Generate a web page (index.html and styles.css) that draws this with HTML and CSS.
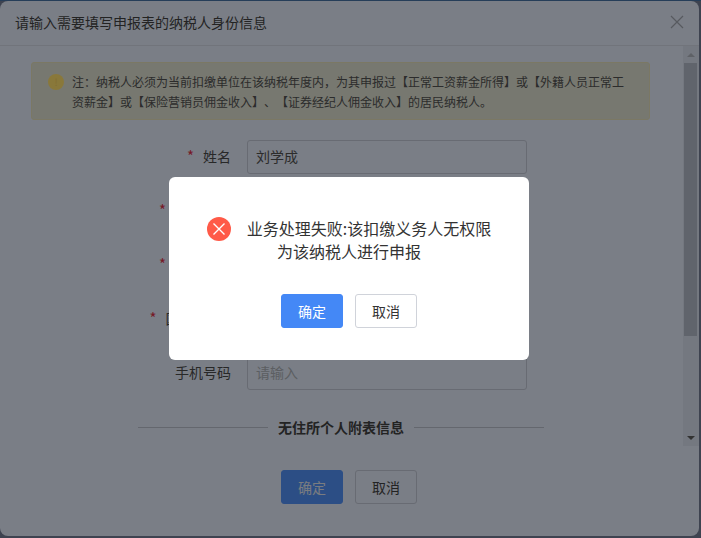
FILE: index.html
```html
<!DOCTYPE html>
<html lang="zh">
<head>
<meta charset="utf-8">
<title>纳税人身份信息</title>
<link rel="stylesheet" href="styles.css">
</head>
<body>
<div class="page">
  <section class="dialog">
    <header class="dialog-head">
      <h1 class="dialog-title">请输入需要填写申报表的纳税人身份信息</h1>
      <svg class="close" viewBox="0 0 14 14" width="14" height="14"><path d="M1 1l12 12M13 1L1 13" fill="none" stroke="#9aa0aa" stroke-width="1.2"/></svg>
    </header>
    <div class="dialog-main">
      <div class="content">
        <div class="notice">
          <span class="notice-icon">!</span>
          <p class="notice-text"><span class="notice-line">注<span class="punct">：</span>纳税人必须为当前扣缴单位在该纳税年度内<span class="punct">，</span>为其申报过【正常工资薪金所得】或【外籍人员正常工</span><span class="notice-line">资薪金】或【保险营销员佣金收入】、【证券经纪人佣金收入】的居民纳税人。</span></p>
        </div>
        <form class="form">
          <div class="row"><label class="label"><i class="star">*</i>姓名</label><div class="input">刘学成</div></div>
          <div class="row"><label class="label"><i class="star">*</i>证件类型</label><div class="input"></div></div>
          <div class="row"><label class="label"><i class="star">*</i>证件号码</label><div class="input"></div></div>
          <div class="row"><label class="label"><i class="star">*</i>国籍(地区)</label><div class="input"></div></div>
          <div class="row"><label class="label">手机号码</label><div class="input placeholder">请输入</div></div>
        </form>
        <div class="divider"><span class="rule"></span><strong class="divider-text">无住所个人附表信息</strong><span class="rule"></span></div>
      </div>
      <div class="scrollbar">
        <span class="arrow-box"><span class="arrow up"></span></span>
        <span class="thumb"></span>
        <span class="arrow-box end"><span class="arrow down"></span></span>
      </div>
    </div>
    <footer class="dialog-foot">
      <button class="btn primary" type="button">确定</button>
      <button class="btn" type="button">取消</button>
    </footer>
  </section>
</div>
<div class="overlay">
  <div class="alert">
    <p class="alert-msg"><svg class="err" viewBox="0 0 24 24" width="24" height="24"><circle cx="12" cy="12" r="12" fill="#ff5a48"/><path d="M6.5 6.5l11 11M17.5 6.5l-11 11" fill="none" stroke="#fff" stroke-width="1.4"/></svg>业务处理失败:该扣缴义务人无权限<br>为该纳税人进行申报</p>
    <div class="alert-actions">
      <button class="btn primary" type="button">确定</button>
      <button class="btn" type="button">取消</button>
    </div>
  </div>
</div>
</body>
</html>
```
FILE: styles.css
```css
* { box-sizing: border-box; }
html, body { margin: 0; height: 100%; }
body {
  background: #68728c;
  font-family: "Noto Sans CJK SC", "Liberation Sans", sans-serif;
  color: #333;
  overflow: hidden;
  border-top: 1px solid #38689f;
  text-spacing-trim: space-all;
}
.page { padding: 0 2px 2px 0; height: 537px; }
.dialog {
  height: 535px;
  background: #e0e8f8;
  border-radius: 8px;
  display: flex;
  flex-direction: column;
}
.dialog-head {
  height: 45px;
  flex: none;
  border-bottom: 1px solid #cfd5e2;
  display: flex;
  align-items: center;
  justify-content: space-between;
  padding: 0 15px 2px;
}
.dialog-title { margin: 0; font-size: 14px; font-weight: 400; line-height: 20px; color: #333; }
.dialog-main { height: 400px; flex: none; display: flex; overflow: hidden; }
.content { flex: 1; padding: 16px 33px 0 31px; }
.notice {
  height: 58px;
  width: 619px;
  background: #dadccc;
  border: 1px solid #e2dcb4;
  border-radius: 3px;
  display: flex;
  padding: 9px 0 0 16px;
  gap: 8px;
}
.notice-icon {
  flex: none;
  width: 16px;
  height: 16px;
  margin-top: 2px;
  border-radius: 50%;
  background: #ffdc60;
  color: #eec850;
  font-size: 10px;
  line-height: 16px;
  text-align: center;
}
.notice-text { margin: 0; width: 560px; font-size: 12px; line-height: 20px; color: #444; }
.notice-line { display: block; white-space: nowrap; }
.punct { font-family: "Noto Sans CJK TC", sans-serif; }
.form { margin-top: 20px; display: flex; flex-direction: column; gap: 20px; }
.row { display: flex; align-items: center; height: 34px; }
.label {
  width: 200px;
  font-size: 14px;
  line-height: 20px;
  text-align: right;
  color: #3c3c3c;
  padding-bottom: 3px;
}
.star { font-style: normal; color: #d81e38; margin-right: 9px; font-size: 15px; }
.input {
  margin-left: 16px;
  width: 280px;
  height: 34px;
  background: #e0e8f8;
  border: 1px solid #bcc3d2;
  border-radius: 3px;
  padding: 0 8px;
  font-size: 14px;
  line-height: 30px;
  color: #444;
}
.placeholder { color: #a4a8b0; }
.divider { margin: 27px 0 0 107px; width: 406px; display: flex; align-items: center; height: 20px; }
.rule { height: 1px; background: #b4bac8; flex: 1; }
.divider-text { font-size: 14px; line-height: 20px; font-weight: 700; padding: 0 10px; color: #333; white-space: nowrap; }
.scrollbar {
  flex: none;
  width: 16px;
  background: #d4dcec;
  display: flex;
  flex-direction: column;
  padding-right: 1px;
  align-items: center;
}
.arrow-box { height: 17px; flex: none; display: flex; align-items: center; justify-content: center; }
.arrow-box.end { margin-top: auto; }
.arrow { width: 0; height: 0; border-left: 4px solid transparent; border-right: 4px solid transparent; }
.arrow.up { border-bottom: 4px solid #a8aeb8; }
.arrow.down { border-top: 4px solid #505050; }
.thumb { width: 13px; height: 273px; background: #acb4c4; }
.dialog-foot { flex: 1; display: flex; justify-content: center; gap: 12px; padding: 24px 1px 0 0; }
.btn {
  width: 62px;
  height: 34px;
  background: #fff;
  border: 1px solid #d0d3da;
  border-radius: 3px;
  font: 14px/20px "Noto Sans CJK SC", "Liberation Sans", sans-serif;
  color: #333;
  padding: 0;
}
.dialog .btn { background: #e0e8f8; border-color: #bcc3d2; }
.btn.primary, .dialog .btn.primary { background: #4488f6; border-color: #4488f6; color: #fff; }
.dialog .btn.primary { color: #e0e4ec; }
.overlay {
  position: fixed;
  inset: 0;
  background: rgba(20, 20, 20, .5);
  padding: 177px 172px 0 169px;
}
.alert {
  width: 360px;
  height: 183px;
  background: #fff;
  border-radius: 6px;
  text-align: center;
}
.alert-msg { margin: 0; padding-top: 40px; font-size: 16px; line-height: 23px; color: #333; height: 117px; }
.err { vertical-align: -2px; margin: -4px 16px -4px 0; }
.alert-actions { display: flex; justify-content: center; gap: 12px; }
```
